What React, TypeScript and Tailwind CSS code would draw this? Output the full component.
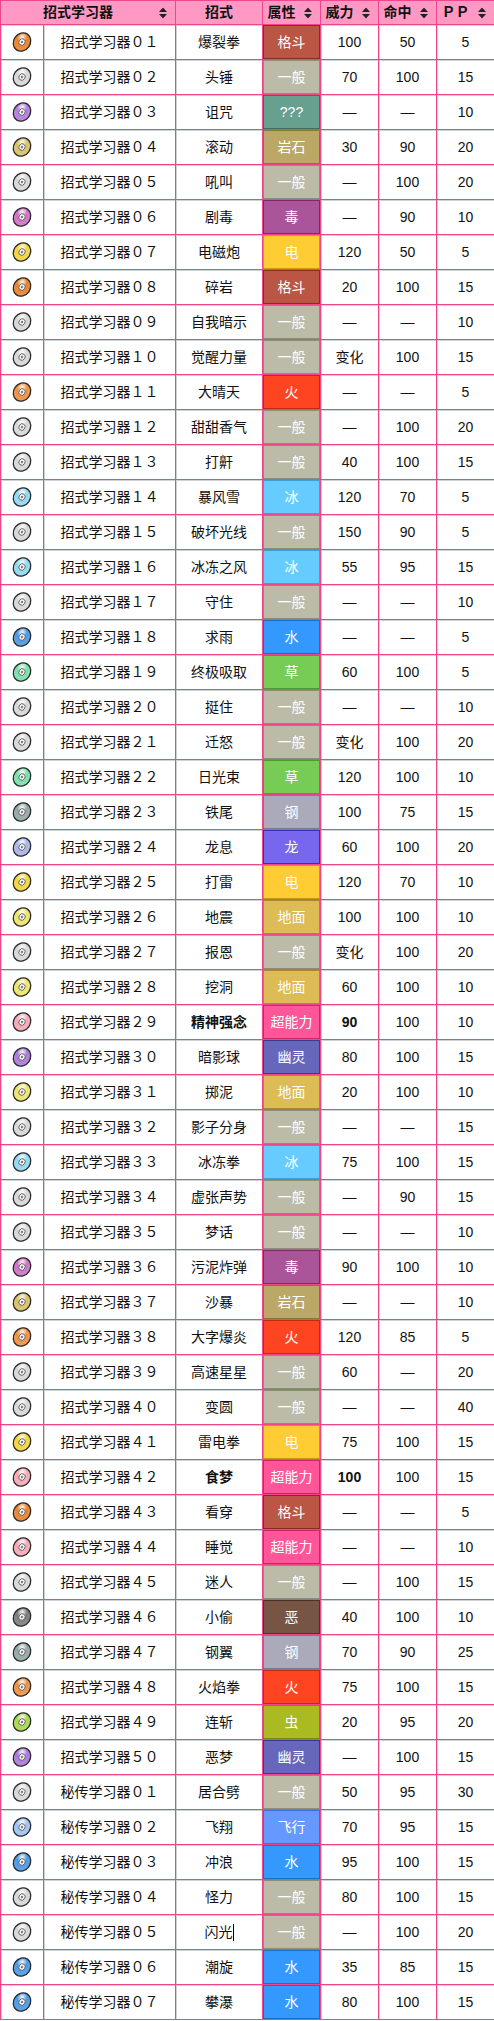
import React from 'react'

type Move = [string, string, string, string, string, string, boolean?]

const TYPES: Record<string, { bg: string; bd: string; disc: string }> = {
  一般: { bg: 'bg-[#bbbba8]', bd: 'border-[#8c8c78]', disc: '#d6d6d6' },
  格斗: { bg: 'bg-[#bb5544]', bd: 'border-[#8a2a22]', disc: '#e8822c' },
  '???': { bg: 'bg-[#68a090]', bd: 'border-[#3f6e60]', disc: '#b57be0' },
  岩石: { bg: 'bg-[#bba866]', bd: 'border-[#857536]', disc: '#d8c064' },
  毒: { bg: 'bg-[#aa5599]', bd: 'border-[#7a2a6c]', disc: '#d070c8' },
  电: { bg: 'bg-[#ffcc33]', bd: 'border-[#c99a10]', disc: '#f2d43a' },
  火: { bg: 'bg-[#ff4422]', bd: 'border-[#c02a10]', disc: '#f09040' },
  冰: { bg: 'bg-[#66ccff]', bd: 'border-[#3aa0d8]', disc: '#8fd8f2' },
  水: { bg: 'bg-[#3399ff]', bd: 'border-[#1d6cc8]', disc: '#4c98e6' },
  草: { bg: 'bg-[#77cc55]', bd: 'border-[#4c9a32]', disc: '#78e0a8' },
  钢: { bg: 'bg-[#aaaabb]', bd: 'border-[#7a7a8c]', disc: '#94a6a6' },
  龙: { bg: 'bg-[#7766ee]', bd: 'border-[#3c2cb8]', disc: '#a8b4e8' },
  地面: { bg: 'bg-[#ddbb55]', bd: 'border-[#a88a30]', disc: '#ece468' },
  超能力: { bg: 'bg-[#ff5599]', bd: 'border-[#c82868]', disc: '#f4a8b4' },
  幽灵: { bg: 'bg-[#6666bb]', bd: 'border-[#3a3a90]', disc: '#ab78dc' },
  恶: { bg: 'bg-[#775544]', bd: 'border-[#4c3226]', disc: '#7c7c80' },
  虫: { bg: 'bg-[#aabb22]', bd: 'border-[#7a8a10]', disc: '#a8d84c' },
  飞行: { bg: 'bg-[#6699ff]', bd: 'border-[#3c6cd8]', disc: '#9cc2f4' },
}

const tm: Move[] = [
  ['爆裂拳', '格斗', '100', '50', '5'],
  ['头锤', '一般', '70', '100', '15'],
  ['诅咒', '???', '—', '—', '10'],
  ['滚动', '岩石', '30', '90', '20'],
  ['吼叫', '一般', '—', '100', '20'],
  ['剧毒', '毒', '—', '90', '10'],
  ['电磁炮', '电', '120', '50', '5'],
  ['碎岩', '格斗', '20', '100', '15'],
  ['自我暗示', '一般', '—', '—', '10'],
  ['觉醒力量', '一般', '变化', '100', '15'],
  ['大晴天', '火', '—', '—', '5'],
  ['甜甜香气', '一般', '—', '100', '20'],
  ['打鼾', '一般', '40', '100', '15'],
  ['暴风雪', '冰', '120', '70', '5'],
  ['破坏光线', '一般', '150', '90', '5'],
  ['冰冻之风', '冰', '55', '95', '15'],
  ['守住', '一般', '—', '—', '10'],
  ['求雨', '水', '—', '—', '5'],
  ['终极吸取', '草', '60', '100', '5'],
  ['挺住', '一般', '—', '—', '10'],
  ['迁怒', '一般', '变化', '100', '20'],
  ['日光束', '草', '120', '100', '10'],
  ['铁尾', '钢', '100', '75', '15'],
  ['龙息', '龙', '60', '100', '20'],
  ['打雷', '电', '120', '70', '10'],
  ['地震', '地面', '100', '100', '10'],
  ['报恩', '一般', '变化', '100', '20'],
  ['挖洞', '地面', '60', '100', '10'],
  ['精神强念', '超能力', '90', '100', '10', true],
  ['暗影球', '幽灵', '80', '100', '15'],
  ['掷泥', '地面', '20', '100', '10'],
  ['影子分身', '一般', '—', '—', '15'],
  ['冰冻拳', '冰', '75', '100', '15'],
  ['虚张声势', '一般', '—', '90', '15'],
  ['梦话', '一般', '—', '—', '10'],
  ['污泥炸弹', '毒', '90', '100', '10'],
  ['沙暴', '岩石', '—', '—', '10'],
  ['大字爆炎', '火', '120', '85', '5'],
  ['高速星星', '一般', '60', '—', '20'],
  ['变圆', '一般', '—', '—', '40'],
  ['雷电拳', '电', '75', '100', '15'],
  ['食梦', '超能力', '100', '100', '15', true],
  ['看穿', '格斗', '—', '—', '5'],
  ['睡觉', '超能力', '—', '—', '10'],
  ['迷人', '一般', '—', '100', '15'],
  ['小偷', '恶', '40', '100', '10'],
  ['钢翼', '钢', '70', '90', '25'],
  ['火焰拳', '火', '75', '100', '15'],
  ['连斩', '虫', '20', '95', '20'],
  ['恶梦', '幽灵', '—', '100', '15'],
].map((m, i) => ['招式学习器' + fw(i + 1), ...m] as unknown as Move)

const hm: Move[] = [
  ['居合劈', '一般', '50', '95', '30'],
  ['飞翔', '飞行', '70', '95', '15'],
  ['冲浪', '水', '95', '100', '15'],
  ['怪力', '一般', '80', '100', '15'],
  ['闪光', '一般', '—', '100', '20'],
  ['潮旋', '水', '35', '85', '15'],
  ['攀瀑', '水', '80', '100', '15'],
].map((m, i) => ['秘传学习器' + fw(i + 1), ...m] as unknown as Move)

function fw(n: number) {
  const s = String(n).padStart(2, '0')
  return s
    .split('')
    .map((c) => String.fromCharCode(c.charCodeAt(0) + 0xfee0))
    .join('')
}

function Disc({ color, id }: { color: string; id: string }) {
  return (
    <svg width="22" height="22" viewBox="0 0 22 22" className="mx-auto block">
      <defs>
        <radialGradient id={id} cx="0.35" cy="0.3" r="0.8">
          <stop offset="0" stopColor="#ffffff" />
          <stop offset="0.35" stopColor={color} />
          <stop offset="1" stopColor={color} stopOpacity="0.85" />
        </radialGradient>
      </defs>
      <ellipse cx="11" cy="11" rx="8.3" ry="9.6" transform="rotate(35 11 11)" fill={`url(#${id})`} stroke="#2a2a2a" strokeWidth="1.3" />
      <ellipse cx="11" cy="11" rx="3" ry="3.4" transform="rotate(35 11 11)" fill="#f4f4f4" stroke="#555" strokeWidth="0.8" />
      <ellipse cx="11" cy="11" rx="1.1" ry="1.3" transform="rotate(35 11 11)" fill="#777" />
    </svg>
  )
}

function Sort() {
  return (
    <svg width="8" height="11" viewBox="0 0 8 11" className="absolute right-[8px] top-1/2 -translate-y-1/2">
      <path d="M4 0 L8 4.5 L0 4.5 Z" fill="#222" />
      <path d="M4 11 L8 6.5 L0 6.5 Z" fill="#222" />
    </svg>
  )
}

const cell = 'border border-[#f0468c] shadow-[inset_1px_1px_0_#d2d2d2] text-center p-0'
const th = 'relative border border-[#f0468c] bg-[#ff99c4] text-center font-bold p-0'

export default function App() {
  const rows = [...tm, ...hm]
  return (
    <div className="w-[494px] bg-white font-['Liberation_Sans','Noto_Sans_CJK_SC',sans-serif] text-[14px] text-[#111]">
      <table className="w-[494px] table-fixed border-collapse">
        <colgroup>
          <col className="w-[43px]" />
          <col className="w-[132px]" />
          <col className="w-[87px]" />
          <col className="w-[58px]" />
          <col className="w-[58px]" />
          <col className="w-[58px]" />
          <col className="w-[58px]" />
        </colgroup>
        <thead>
          <tr className="h-[24px]">
            <th colSpan={2} className={`${th} pr-[20px]`}>
              招式学习器
              <Sort />
            </th>
            <th className={th}>招式</th>
            <th className={`${th} pr-[20px]`}>
              属性
              <Sort />
            </th>
            <th className={`${th} pr-[20px]`}>
              威力
              <Sort />
            </th>
            <th className={`${th} pr-[20px]`}>
              命中
              <Sort />
            </th>
            <th className={`${th} pr-[20px]`}>
              ＰＰ
              <Sort />
            </th>
          </tr>
        </thead>
        <tbody>
          {rows.map((r, i) => {
            const [name, move, type, power, acc, pp, bold] = r
            const t = TYPES[type]
            return (
              <tr key={name} className="h-[35px]">
                <td className={cell}>
                  <Disc color={t.disc} id={`d${i}`} />
                </td>
                <td className={cell}>{name}</td>
                <td className={`${cell} ${bold ? 'font-bold' : ''}`}>
                  {move}
                  {move === '闪光' && <span className="inline-block w-px h-[17px] bg-black align-middle" />}
                </td>
                <td className={`border border-[#f0468c] p-0 ${t.bg}`}>
                  <div className={`h-[34px] flex items-center justify-center border ${t.bd} text-white`}>{type}</div>
                </td>
                <td className={`${cell} ${bold ? 'font-bold' : ''}`}>{power}</td>
                <td className={cell}>{acc}</td>
                <td className={cell}>{pp}</td>
              </tr>
            )
          })}
        </tbody>
      </table>
    </div>
  )
}
